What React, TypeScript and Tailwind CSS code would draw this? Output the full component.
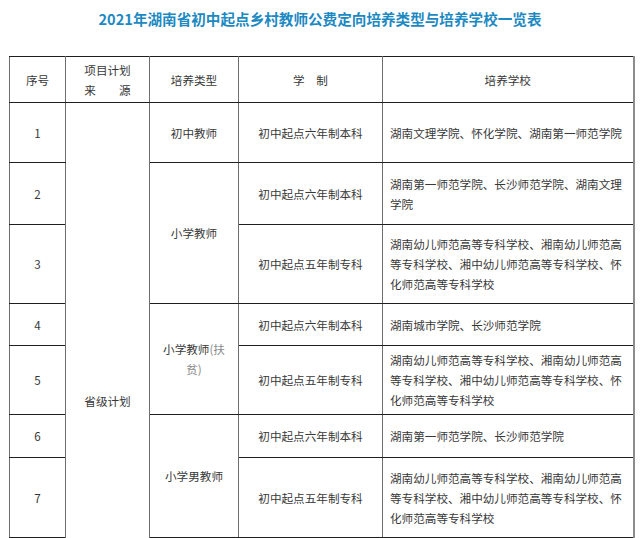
import React from 'react';

const font = { fontFamily: '"Noto Sans CJK SC", "Noto Sans", sans-serif' };

const cell = 'border border-y-[#1f1f1f] border-x-[#6e6e6e] text-center align-middle p-0';
const school = `${cell} text-left px-[7px]`;

const App: React.FC = () => {
  return (
    <div className="w-[640px] bg-white text-[#383838] text-[11.6px] leading-[20px]" style={font}>
      <h1 className="pt-[9px] h-[56px] text-center text-[14.6px] font-bold leading-[20px] text-[#1d89c2]">
        2021年湖南省初中起点乡村教师公费定向培养类型与培养学校一览表
      </h1>
      <table className="ml-[9px] w-[624px] table-fixed border-collapse">
        <colgroup>
          <col className="w-[56px]" />
          <col className="w-[84px]" />
          <col className="w-[89px]" />
          <col className="w-[144px]" />
          <col className="w-[251px]" />
        </colgroup>
        <tbody>
          <tr className="h-[46px]">
            <td className={cell}>序号</td>
            <td className={cell}>
              <div>项目计划</div>
              <div>来　　源</div>
            </td>
            <td className={cell}>培养类型</td>
            <td className={cell}>学　制</td>
            <td className={`${cell} border-r-2 border-r-[#8c8c8c]`}>培养学校</td>
          </tr>
          <tr className="h-[60px]">
            <td className={cell}>1</td>
            <td className={cell} rowSpan={9}>省级计划</td>
            <td className={cell}>初中教师</td>
            <td className={cell}>初中起点六年制本科</td>
            <td className={`${school} border-r-2 border-r-[#8c8c8c]`}>湖南文理学院、怀化学院、湖南第一师范学院</td>
          </tr>
          <tr className="h-[62px]">
            <td className={cell}>2</td>
            <td className={cell} rowSpan={2}>小学教师</td>
            <td className={cell}>初中起点六年制本科</td>
            <td className={`${school} border-r-2 border-r-[#8c8c8c]`}>湖南第一师范学院、长沙师范学院、湖南文理学院</td>
          </tr>
          <tr className="h-[79px]">
            <td className={cell}>3</td>
            <td className={cell}>初中起点五年制专科</td>
            <td className={`${school} border-r-2 border-r-[#8c8c8c]`}>
              湖南幼儿师范高等专科学校、湘南幼儿师范高等专科学校、湘中幼儿师范高等专科学校、怀化师范高等专科学校
            </td>
          </tr>
          <tr className="h-[42px]">
            <td className={cell}>4</td>
            <td className={`${cell} px-[7px]`} rowSpan={2}>
              小学教师<span className="text-[#8a8a8a]">(扶贫)</span>
            </td>
            <td className={cell}>初中起点六年制本科</td>
            <td className={`${school} border-r-2 border-r-[#8c8c8c]`}>湖南城市学院、长沙师范学院</td>
          </tr>
          <tr className="h-[69px]">
            <td className={cell}>5</td>
            <td className={cell}>初中起点五年制专科</td>
            <td className={`${school} border-r-2 border-r-[#8c8c8c]`}>
              湖南幼儿师范高等专科学校、湘南幼儿师范高等专科学校、湘中幼儿师范高等专科学校、怀化师范高等专科学校
            </td>
          </tr>
          <tr className="h-[43px]">
            <td className={cell}>6</td>
            <td className={cell} rowSpan={2}>小学男教师</td>
            <td className={cell}>初中起点六年制本科</td>
            <td className={`${school} border-r-2 border-r-[#8c8c8c]`}>湖南第一师范学院、长沙师范学院</td>
          </tr>
          <tr className="h-[80px]">
            <td className={cell}>7</td>
            <td className={cell}>初中起点五年制专科</td>
            <td className={`${school} border-r-2 border-r-[#8c8c8c]`}>
              湖南幼儿师范高等专科学校、湘南幼儿师范高等专科学校、湘中幼儿师范高等专科学校、怀化师范高等专科学校
            </td>
          </tr>
          <tr className="h-[80px]">
            <td className={cell}>8</td>
            <td className={cell} rowSpan={2}>幼儿园教师</td>
            <td className={cell}>初中起点五年制专科</td>
            <td className={`${school} border-r-2 border-r-[#8c8c8c]`}>
              湖南幼儿师范高等专科学校、湘南幼儿师范高等专科学校、湘中幼儿师范高等专科学校、长沙师范学院
            </td>
          </tr>
          <tr className="h-[81px]">
            <td className={cell}>9</td>
            <td className={cell}>初中起点五年制专科</td>
            <td className={`${school} border-r-2 border-r-[#8c8c8c]`}>
              湖南幼儿师范高等专科学校、湘南幼儿师范高等专科学校、湘中幼儿师范高等专科学校、怀化师范高等专科学校
            </td>
          </tr>
        </tbody>
      </table>
    </div>
  );
};

export default App;
